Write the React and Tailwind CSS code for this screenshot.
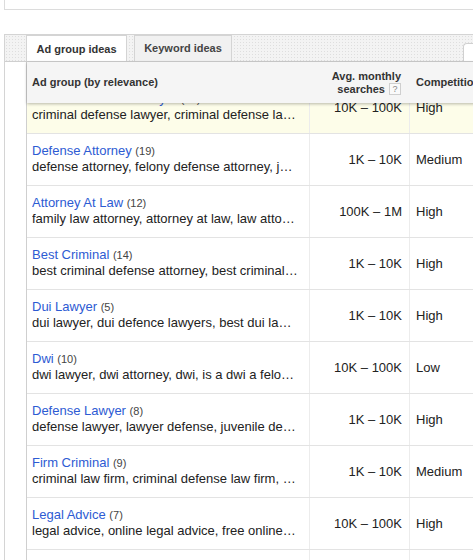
import React from "react";

const rows = [
  { title: "Criminal Defense Lawyer", count: 12, desc: "criminal defense lawyer, criminal defense lawyers, criminal lawyer", range: "10K – 100K", comp: "High", hover: true },
  { title: "Defense Attorney", count: 19, desc: "defense attorney, felony defense attorney, juvenile defense attorney", range: "1K – 10K", comp: "Medium" },
  { title: "Attorney At Law", count: 12, desc: "family law attorney, attorney at law, law attorney, lawyer attorney", range: "100K – 1M", comp: "High" },
  { title: "Best Criminal", count: 14, desc: "best criminal defense attorney, best criminal lawyer, best lawyers", range: "1K – 10K", comp: "High" },
  { title: "Dui Lawyer", count: 5, desc: "dui lawyer, dui defence lawyers, best dui lawyer, dui attorneys", range: "1K – 10K", comp: "High" },
  { title: "Dwi", count: 10, desc: "dwi lawyer, dwi attorney, dwi, is a dwi a felony, dwi lawyers", range: "10K – 100K", comp: "Low" },
  { title: "Defense Lawyer", count: 8, desc: "defense lawyer, lawyer defense, juvenile defense lawyer, lawyers", range: "1K – 10K", comp: "High" },
  { title: "Firm Criminal", count: 9, desc: "criminal law firm, criminal defense law firm,  top criminal law firms", range: "1K – 10K", comp: "Medium" },
  { title: "Legal Advice", count: 7, desc: "legal advice, online legal advice, free online legal advice", range: "10K – 100K", comp: "High" },
  { title: "Drug Lawyer", count: 6, desc: "drug lawyer, drug lawyers, drug charges lawyer", range: "1K – 10K", comp: "High" },
];

const dots = "bg-[#f3f3f3] bg-[radial-gradient(#dedede_1px,transparent_1px)] bg-[length:3px_3px]";

const App = () => {
  return (
    <div className="h-[560px] w-[473px] overflow-hidden bg-white font-['Liberation_Sans',Arial,sans-serif]">
      {/* top box */}
      <div className="ml-[4px] h-[10px] border-l border-b border-[#dcdcdc]" />

      {/* panel */}
      <div className="ml-[4px] mt-[24px] border-l border-t border-[#d4d4d4]">
        {/* tabs */}
        <div className={`flex h-[27px] items-end overflow-hidden border-b border-[#cfcfcf] pl-[21px] ${dots}`}>
          <div className="relative -mb-px flex h-[27px] w-[101px] shrink-0 items-center justify-center border-x border-t border-[#d4d4d4] bg-white text-[11px] font-bold text-[#333]">
            Ad group ideas
          </div>
          <div className="ml-[7px] flex h-[26px] w-[98px] shrink-0 items-center justify-center border-x border-t border-[#d4d4d4] bg-[#f1f1f1] text-[11px] font-bold text-[#444]">
            Keyword ideas
          </div>
          <div className="ml-[231px] h-[18px] w-[40px] shrink-0 rounded-tl-sm border-l border-t border-[#d0d0d0] bg-white" />
        </div>

        {/* body */}
        <div className="pl-[21px]">
          <div className="w-[560px] border-l border-[#cfcfcf]">
            {/* header */}
            <div className="relative z-10 flex h-[41px] items-center bg-[#f5f5f5] text-[11px] font-bold text-[#333] shadow-[0_1px_3px_rgba(0,0,0,0.28)]">
              <div className="w-[282px] shrink-0 pl-[5px]">Ad group (by relevance)</div>
              <div className="w-[100px] shrink-0 pr-[8px] text-right leading-[13px]">
                <div>Avg. monthly</div>
                <div className="flex items-center justify-end">
                  searches
                  <span className="ml-[4px] flex h-[12px] w-[12px] items-center justify-center border border-[#cfcfcf] bg-[#fafafa] text-[9px] font-normal text-[#888]">?</span>
                </div>
              </div>
              <div className="pl-[7px]">Competition</div>
            </div>

            {/* rows (scrolled) */}
            <div className="-mt-[21px]">
              {rows.map((r) => (
                <div
                  key={r.title}
                  className={`flex h-[52px] border-b border-[#e3e3e3] text-[13px] text-[#222] ${r.hover ? "bg-[#fdfde9]" : "bg-white"}`}
                >
                  <div className="w-[282px] shrink-0 pl-[5px] pr-[11px] pt-[9px] leading-[16px]">
                    <div className="truncate">
                      <span className="text-[#2d5bd3]">{r.title}</span>{" "}
                      <span className="text-[11px] text-[#444]">({r.count})</span>
                    </div>
                    <div className="truncate">{r.desc}</div>
                  </div>
                  <div className="flex w-[100px] shrink-0 items-center justify-end border-l border-[#ececec] pr-[7px]">
                    {r.range}
                  </div>
                  <div className="flex w-[120px] shrink-0 items-center border-l border-[#ececec] pl-[6px]">
                    {r.comp}
                  </div>
                </div>
              ))}
            </div>
          </div>
        </div>
      </div>
    </div>
  );
};

export default App;
